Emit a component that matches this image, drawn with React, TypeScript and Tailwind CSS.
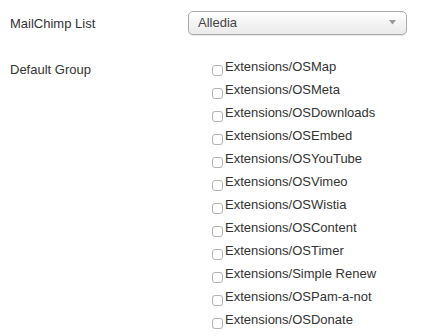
import React from 'react';

const groups = [
  'Extensions/OSMap',
  'Extensions/OSMeta',
  'Extensions/OSDownloads',
  'Extensions/OSEmbed',
  'Extensions/OSYouTube',
  'Extensions/OSVimeo',
  'Extensions/OSWistia',
  'Extensions/OSContent',
  'Extensions/OSTimer',
  'Extensions/Simple Renew',
  'Extensions/OSPam-a-not',
  'Extensions/OSDonate',
];

export default function App() {
  return (
    <div className="w-[431px] h-[336px] bg-white overflow-hidden pt-[11px] text-[13px] text-[#333] font-['Liberation_Sans',Arial,sans-serif]">
      <div className="flex items-start">
        <label className="w-[188px] pl-[10px] pt-[1px] leading-[23px]">MailChimp List</label>
        <div className="w-[219px] h-[24px] flex items-center justify-between pl-[9px] pr-[10px] rounded-[5px] border border-[#aaa] bg-gradient-to-b from-white via-[#f4f4f4] to-[#eaeaea] shadow-[0_1px_1px_rgba(0,0,0,0.1)] text-[#444]">
          <span>Alledia</span>
          <svg width="7" height="5" viewBox="0 0 7 5" className="mb-[1px]">
            <path d="M0 0 L7 0 L3.5 4.5 Z" fill="#999" />
          </svg>
        </div>
      </div>
      <div className="flex items-start mt-[20px]">
        <label className="w-[188px] pl-[10px] pt-[3px] leading-[23px]">Default Group</label>
        <div className="pl-[24px] flex flex-col">
          {groups.map((g) => (
            <label key={g} className="flex items-start leading-[23px] h-[23px]">
              <input
                type="checkbox"
                className="appearance-none m-0 mt-[10px] mr-[2px] w-[11px] h-[11px] rounded-[3px] border border-[#b4b4b4] bg-white shrink-0"
              />
              <span>{g}</span>
            </label>
          ))}
        </div>
      </div>
    </div>
  );
}
